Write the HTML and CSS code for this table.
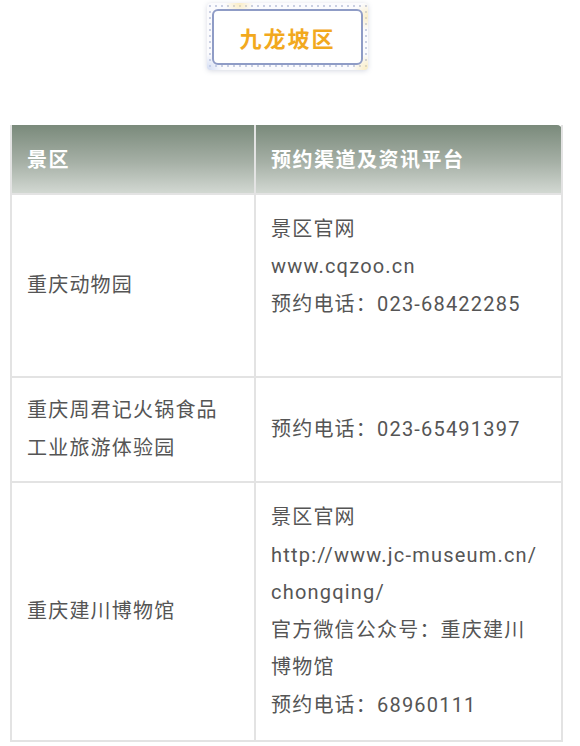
FILE: index.html
```html
<!DOCTYPE html>
<html lang="zh">
<head>
<meta charset="utf-8">
<link rel="stylesheet" href="styles.css">
</head>
<body>
<div class="badge-wrap">
  <div class="badge">
    <div class="badge-inner">九龙坡区</div>
  </div>
</div>
<table class="info">
  <thead>
    <tr>
      <th class="col-a">景区</th>
      <th class="col-b">预约渠道及资讯平台</th>
    </tr>
  </thead>
  <tbody>
    <tr>
      <td class="col-a">重庆动物园</td>
      <td class="col-b extra">景区官网<br>www.cqzoo.cn<br>预约电话：023-68422285</td>
    </tr>
    <tr class="tight">
      <td class="col-a">重庆周君记火锅食品<br>工业旅游体验园</td>
      <td class="col-b">预约电话：023-65491397</td>
    </tr>
    <tr>
      <td class="col-a">重庆建川博物馆</td>
      <td class="col-b">景区官网<br>http://www.jc-museum.cn/<br>chongqing/<br>官方微信公众号：重庆建川<br>博物馆<br>预约电话：68960111</td>
    </tr>
  </tbody>
</table>
</body>
</html>
```

FILE: styles.css
```css
html, body {
  margin: 0;
  padding: 0;
  background: #ffffff;
}
body {
  font-family: Roboto, "Noto Sans CJK SC", sans-serif;
  color: #555555;
}
.badge-wrap {
  display: flex;
  justify-content: center;
  padding: 3px 0 0 0;
  margin-left: -5px;
}
.badge {
  width: 161px;
  height: 67px;
  box-sizing: border-box;
  padding: 6px 5px 5px 5px;
  border-radius: 4px;
  background-color: #fbfbfd;
  background-image:
    radial-gradient(circle at 100% 100%, rgba(250, 226, 150, 0.6) 0, rgba(250, 226, 150, 0) 16px),
    radial-gradient(circle at 0 100%, rgba(190, 205, 240, 0.65) 0, rgba(190, 205, 240, 0) 16px),
    radial-gradient(circle at 20% 0, rgba(250, 226, 150, 0.55) 0, rgba(250, 226, 150, 0) 14px),
    radial-gradient(circle at 100% 20%, rgba(250, 226, 150, 0.5) 0, rgba(250, 226, 150, 0) 14px),
    radial-gradient(circle, #c9cfe2 0.9px, rgba(255, 255, 255, 0) 1.3px);
  background-size: auto, auto, auto, auto, 6px 6px;
  box-shadow: 0 1px 5px rgba(120, 130, 160, 0.3);
}
.badge-inner {
  height: 100%;
  box-sizing: border-box;
  border: 2px solid #8f9cc6;
  border-radius: 6px;
  background: #ffffff;
  display: flex;
  align-items: center;
  justify-content: center;
  font-family: "Noto Sans CJK SC", sans-serif;
  font-weight: 700;
  font-size: 22px;
  letter-spacing: 2px;
  color: #f2a91e;
}
.info {
  margin: 55px 0 0 10px;
  width: 553px;
  border-collapse: collapse;
  table-layout: fixed;
  font-size: 20px;
  letter-spacing: 1.2px;
  line-height: 37.5px;
}
.info th,
.info td {
  border: 2px solid #e3e3e3;
  text-align: left;
  vertical-align: middle;
  padding: 16px 10px 16px 15px;
}
.info th {
  background: linear-gradient(to bottom, #7a8a7b 0%, #a6b0a6 55%, #d2d8d2 100%);
  color: #ffffff;
  font-family: "Noto Sans CJK SC", sans-serif;
  font-weight: 700;
  letter-spacing: 1.5px;
  padding-top: 15px;
  padding-bottom: 15px;
  border-top: none;
}
.info th.col-b {
  border-top-right-radius: 5px;
}
.info .col-a {
  width: 244px;
  box-sizing: border-box;
}
.info td.extra {
  padding-bottom: 53px;
}
.info tr.tight td {
  padding-top: 14px;
  padding-bottom: 14px;
}
```
